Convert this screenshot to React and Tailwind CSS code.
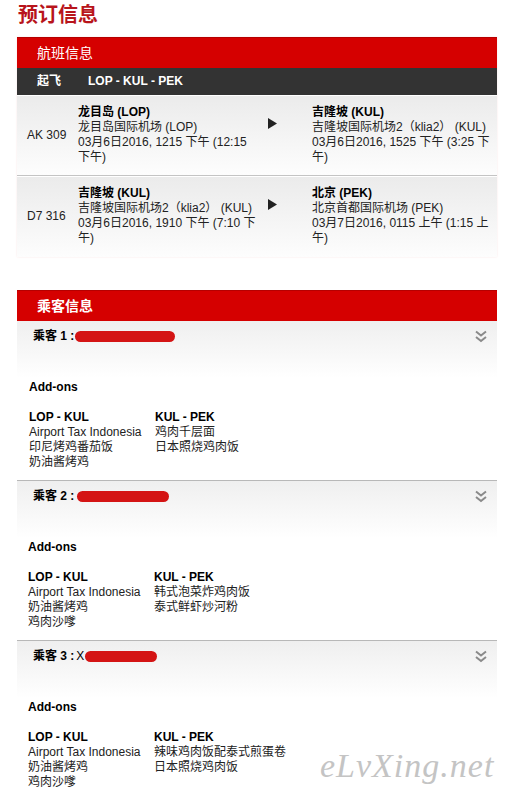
const flights = [
  {
    no: 'AK 309',
    from: ['龙目岛 (LOP)', '龙目岛国际机场 (LOP)', '03月6日2016, 1215 下午 (12:15', '下午)'],
    to: ['吉隆坡 (KUL)', '吉隆坡国际机场2（klia2） (KUL)', '03月6日2016, 1525 下午 (3:25 下', '午)'],
  },
  {
    no: 'D7 316',
    from: ['吉隆坡 (KUL)', '吉隆坡国际机场2（klia2） (KUL)', '03月6日2016, 1910 下午 (7:10 下', '午)'],
    to: ['北京 (PEK)', '北京首都国际机场 (PEK)', '03月7日2016, 0115 上午 (1:15 上', '午)'],
  },
]

const passengers = [
  {
    label: '乘客 1 :',
    pad: 'pl-[12px]',
    col: 'w-[126px]',
    blob: 'w-[100px] ml-[1px]',
    left: ['Airport Tax Indonesia', '印尼烤鸡番茄饭', '奶油酱烤鸡'],
    right: ['鸡肉千层面', '日本照烧鸡肉饭'],
  },
  {
    label: '乘客 2 :',
    pad: 'pl-[11px]',
    col: 'w-[126px]',
    blob: 'w-[92px] ml-[3px]',
    left: ['Airport Tax Indonesia', '奶油酱烤鸡', '鸡肉沙嗲'],
    right: ['韩式泡菜炸鸡肉饭', '泰式鲜虾炒河粉'],
  },
  {
    label: '乘客 3 :',
    pad: 'pl-[11px]',
    col: 'w-[126px]',
    blob: 'w-[72px] ml-[1px]',
    prefix: 'X',
    left: ['Airport Tax Indonesia', '奶油酱烤鸡', '鸡肉沙嗲'],
    right: ['辣味鸡肉饭配泰式煎蛋卷', '日本照烧鸡肉饭'],
  },
]

const Chevrons = () => (
  <svg width="12" height="13" viewBox="0 0 12 13" fill="none" stroke="#8a8a8a" strokeWidth="2">
    <path d="M1 1.5 L6 5.5 L11 1.5" />
    <path d="M1 7 L6 11 L11 7" />
  </svg>
)

const FlightRow = ({ flight, last }) => (
  <div
    className={`h-[80px] pt-[9px] bg-linear-to-b from-[#ebebeb] to-[#fdfdfd] ${
      last ? '' : 'border-b border-[#c4c4c4] mb-[1px]'
    }`}
  >
    <div className="flex items-center">
      <div className="w-[61px] pl-[10px] text-[#222]">{flight.no}</div>
      <div className="w-[190px]">
        {flight.from.map((line, i) => (
          <div key={i} className={`whitespace-nowrap ${i === 0 ? 'font-bold text-black' : ''}`}>
            {line}
          </div>
        ))}
      </div>
      <div className="w-[44px] self-start pt-[13px]">
        <svg width="9" height="11" viewBox="0 0 9 11">
          <path d="M0 0 L9 5.5 L0 11 Z" fill="#222" />
        </svg>
      </div>
      <div>
        {flight.to.map((line, i) => (
          <div key={i} className={`whitespace-nowrap ${i === 0 ? 'font-bold text-black' : ''}`}>
            {line}
          </div>
        ))}
      </div>
    </div>
  </div>
)

const Passenger = ({ p, last }) => (
  <div className={`h-[160px] ${last ? '' : 'border-b border-[#b8b8b8]'}`}>
    <div className="h-[57px] bg-linear-to-b from-[#efefef] to-white flex items-start justify-between pt-[8px] pl-[16px] pr-[10px]">
      <div className="flex items-center font-bold text-black">
        <span>{p.label}</span>
        {p.prefix && <span className="font-normal ml-[2px]">{p.prefix}</span>}
        <span className={`h-[11px] rounded-full bg-[#d41414] ${p.blob}`} />
      </div>
      <div className="pt-[1px]">
        <Chevrons />
      </div>
    </div>
    <div className={p.pad}>
      <div className="mt-[2px] font-bold text-black">Add-ons</div>
      <div className="mt-[15px] flex">
        <div className={p.col}>
          <div className="font-bold text-black">LOP - KUL</div>
          {p.left.map((l, i) => (
            <div key={i} className="whitespace-nowrap">{l}</div>
          ))}
        </div>
        <div>
          <div className="font-bold text-black">KUL - PEK</div>
          {p.right.map((l, i) => (
            <div key={i} className="whitespace-nowrap">{l}</div>
          ))}
        </div>
      </div>
    </div>
  </div>
)

export default function App() {
  return (
    <div className="relative w-[524px] h-[799px] overflow-hidden bg-white font-['Liberation_Sans','Noto_Sans_CJK_SC',sans-serif] text-[12px] leading-[15px] text-[#222]">
      <div className="h-[37px] pl-[18px] pt-[3px] text-[20px] leading-[24px] font-bold text-[#b8141b]">
        预订信息
      </div>

      <div className="mx-[17px] w-[480px] shadow-[0_0_2px_rgba(200,0,0,0.1)]">
        <div className="h-[31px] bg-[#d50000] border-t border-[#b50000] pl-[20px] flex items-center text-[14px] text-white">
          航班信息
        </div>
        <div className="h-[27px] bg-[#333333] pl-[20px] flex items-center font-bold text-white">
          <span className="w-[51px]">起飞</span>
          <span>LOP - KUL - PEK</span>
        </div>
        <div className="h-[1px] bg-white" />
        {flights.map((f, i) => (
          <FlightRow key={i} flight={f} last={i === flights.length - 1} />
        ))}
      </div>

      <div className="mt-[33px] mx-[17px] w-[480px]">
        <div className="h-[31px] bg-[#d50000] border-t border-[#b50000] pl-[20px] flex items-center text-[14px] font-bold text-white">
          乘客信息
        </div>
        {passengers.map((p, i) => (
          <Passenger key={i} p={p} last={i === passengers.length - 1} />
        ))}
      </div>

      <div className="absolute left-[320px] top-[746px] font-['Liberation_Serif',serif] italic text-[34px] leading-[40px] text-[#c4c4c4] tracking-[1px]">
        eLvXing.net
      </div>
    </div>
  )
}
